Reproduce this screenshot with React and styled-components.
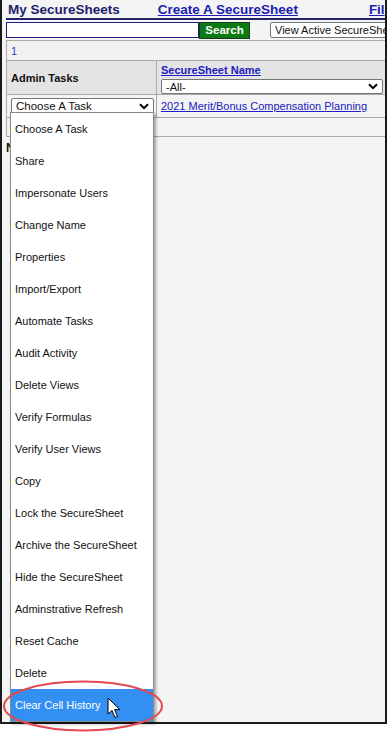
import React from "react";
import styled, { createGlobalStyle } from "styled-components";

const GlobalStyle = createGlobalStyle`
  body {
    margin: 0;
    background: #fff;
    font-family: "Liberation Sans", Arial, sans-serif;
  }
`;

const tasks = [
  "Choose A Task",
  "Share",
  "Impersonate Users",
  "Change Name",
  "Properties",
  "Import/Export",
  "Automate Tasks",
  "Audit Activity",
  "Delete Views",
  "Verify Formulas",
  "Verify User Views",
  "Copy",
  "Lock the SecureSheet",
  "Archive the SecureSheet",
  "Hide the SecureSheet",
  "Adminstrative Refresh",
  "Reset Cache",
  "Delete",
  "Clear Cell History",
];

const Chevron = () => (
  <svg width="10" height="7" viewBox="0 0 10 7">
    <path d="M1 1.2 L5 5.2 L9 1.2" fill="none" stroke="#000" strokeWidth="2" />
  </svg>
);

const Page = styled.div`
  position: relative;
  width: 387px;
  height: 736px;
`;

const Frame = styled.div`
  box-sizing: border-box;
  width: 387px;
  height: 724px;
  background: #f4f4f4;
  border-left: 2px solid #1a1a1a;
  border-right: 2px solid #1a1a1a;
  border-bottom: 2px solid #1a1a1a;
  overflow: hidden;
  padding-left: 4px;
`;

const TopBar = styled.div`
  display: flex;
  align-items: flex-end;
  height: 18px;
  width: 420px;
  border-bottom: 2px solid #23236e;
  white-space: nowrap;
`;

const Title = styled.span`
  flex: none;
  font-size: 13.5px;
  font-weight: bold;
  color: ${(p) => (p.$link ? "#1c1cb0" : "#22226a")};
  text-decoration: ${(p) => (p.$link ? "underline" : "none")};
  margin-left: ${(p) => p.$left || 0}px;
  margin-right: ${(p) => p.$gap || 0}px;
  line-height: 17px;
`;

const SearchRow = styled.div`
  display: flex;
  align-items: center;
  height: 18px;
  width: 420px;
  margin-top: 1px;
  white-space: nowrap;
`;

const SearchInput = styled.div`
  flex: none;
  box-sizing: border-box;
  width: 193px;
  height: 16px;
  border: 1.5px solid #1a1a80;
  background: #fff;
`;

const SearchButton = styled.div`
  flex: none;
  box-sizing: border-box;
  width: 51px;
  height: 17px;
  background: #0b7a12;
  border: 1px solid #1b3a1b;
  color: #fff;
  font-size: 11.5px;
  font-weight: bold;
  display: flex;
  align-items: center;
  justify-content: center;
`;

const ViewSelect = styled.div`
  flex: none;
  box-sizing: border-box;
  margin-left: 20px;
  width: 140px;
  height: 16px;
  border: 1px solid #767676;
  border-radius: 2px;
  background: #fff;
  font-size: 11px;
  color: #111;
  padding-left: 4px;
  line-height: 14px;
`;

const Table = styled.div`
  width: 400px;
  border-left: 1px solid #aaa;
  margin-top: 1px;
`;

const Row = styled.div`
  display: flex;
  height: ${(p) => p.$h}px;
  background: ${(p) => p.$bg || "#f4f4f4"};
  border-top: 1px solid #aaa;
  border-bottom: ${(p) => (p.$last ? "1px solid #aaa" : "none")};
  box-sizing: border-box;
`;

const Cell = styled.div`
  box-sizing: border-box;
  width: ${(p) => (p.$w ? `${p.$w}px` : "auto")};
  flex: ${(p) => (p.$w ? "none" : 1)};
  border-right: ${(p) => (p.$w ? "1px solid #aaa" : "none")};
  padding: ${(p) => p.$pad || "0 4px"};
  display: flex;
  flex-direction: column;
  justify-content: ${(p) => p.$justify || "center"};
  font-size: 11px;
`;

const PageLink = styled.span`
  color: #3434c8;
  font-size: 11px;
`;

const HeadText = styled.span`
  font-weight: bold;
  font-size: 11px;
  color: #111;
`;

const ColLink = styled.span`
  font-weight: bold;
  font-size: 11px;
  color: #2020c0;
  text-decoration: underline;
  line-height: 13px;
`;

const SheetLink = styled.span`
  font-size: 11px;
  color: #2020c0;
  text-decoration: underline;
`;

const Select = styled.div`
  box-sizing: border-box;
  display: flex;
  align-items: center;
  justify-content: space-between;
  width: ${(p) => p.$w}px;
  height: 16px;
  margin-top: ${(p) => p.$top || 0}px;
  border: 1px solid #767676;
  border-radius: 2px;
  background: #fff;
  font-size: ${(p) => p.$fs || 11}px;
  color: #111;
  padding: 0 4px;
`;

const Section = styled.div`
  margin-top: 4px;
  font-size: 12px;
  font-weight: bold;
  color: #111;
`;

const Dropdown = styled.ul`
  position: absolute;
  left: 10px;
  top: 112px;
  width: 142px;
  margin: 0;
  padding: 0;
  list-style: none;
  background: #fff;
  border: 1px solid #8a8a8a;
  box-shadow: 2px 2px 3px rgba(0, 0, 0, 0.35);
`;

const Option = styled.li`
  height: 32px;
  display: flex;
  align-items: center;
  padding-left: 4px;
  font-size: 11px;
  color: ${(p) => (p.$active ? "#fff" : "#111")};
  background: ${(p) => (p.$active ? "#3390f2" : "#fff")};
`;

const Overlay = styled.svg`
  position: absolute;
  left: ${(p) => p.$x}px;
  top: ${(p) => p.$y}px;
  pointer-events: none;
`;

export default function App() {
  return (
    <>
      <GlobalStyle />
      <Page>
        <Frame>
          <TopBar>
            <Title $left={2} $gap={38}>My SecureSheets</Title>
            <Title $link $gap={71}>Create A SecureSheet</Title>
            <Title $link>Fil</Title>
          </TopBar>
          <SearchRow>
            <SearchInput />
            <SearchButton>Search</SearchButton>
            <ViewSelect>View Active SecureSheets</ViewSelect>
          </SearchRow>
          <Table>
            <Row $h={20} $bg="#f2f2f2">
              <Cell>
                <PageLink>1</PageLink>
              </Cell>
            </Row>
            <Row $h={34} $bg="#e4e4e4">
              <Cell $w={150}>
                <HeadText>Admin Tasks</HeadText>
              </Cell>
              <Cell $pad="3px 4px 0 4px" $justify="flex-start">
                <ColLink>SecureSheet Name</ColLink>
                <Select $w={222} $top={2}>
                  -All-
                  <Chevron />
                </Select>
              </Cell>
            </Row>
            <Row $h={23}>
              <Cell $w={150}>
                <Select $w={143} $fs={11.5}>
                  Choose A Task
                  <Chevron />
                </Select>
              </Cell>
              <Cell>
                <SheetLink>2021 Merit/Bonus Compensation Planning</SheetLink>
              </Cell>
            </Row>
            <Row $h={20} $last />
          </Table>
          <Section>Notes</Section>
        </Frame>

        <Dropdown>
          {tasks.map((t, i) => (
            <Option key={t} $active={i === tasks.length - 1}>
              {t}
            </Option>
          ))}
        </Dropdown>

        <Overlay $x={2} $y={680} width="164" height="54" viewBox="0 0 164 54">
          <ellipse cx="81" cy="26" rx="79" ry="24.5" fill="none" stroke="#e24a4f" strokeWidth="2" />
        </Overlay>

        <Overlay $x={107} $y={697} width="16" height="22" viewBox="0 0 16 22">
          <path
            d="M1 1 L1 17 L5 13.5 L8 20.5 L10.5 19.5 L7.6 12.6 L12.8 12.6 Z"
            fill="#fff"
            stroke="#000"
            strokeWidth="1"
            strokeLinejoin="round"
          />
        </Overlay>
      </Page>
    </>
  );
}
